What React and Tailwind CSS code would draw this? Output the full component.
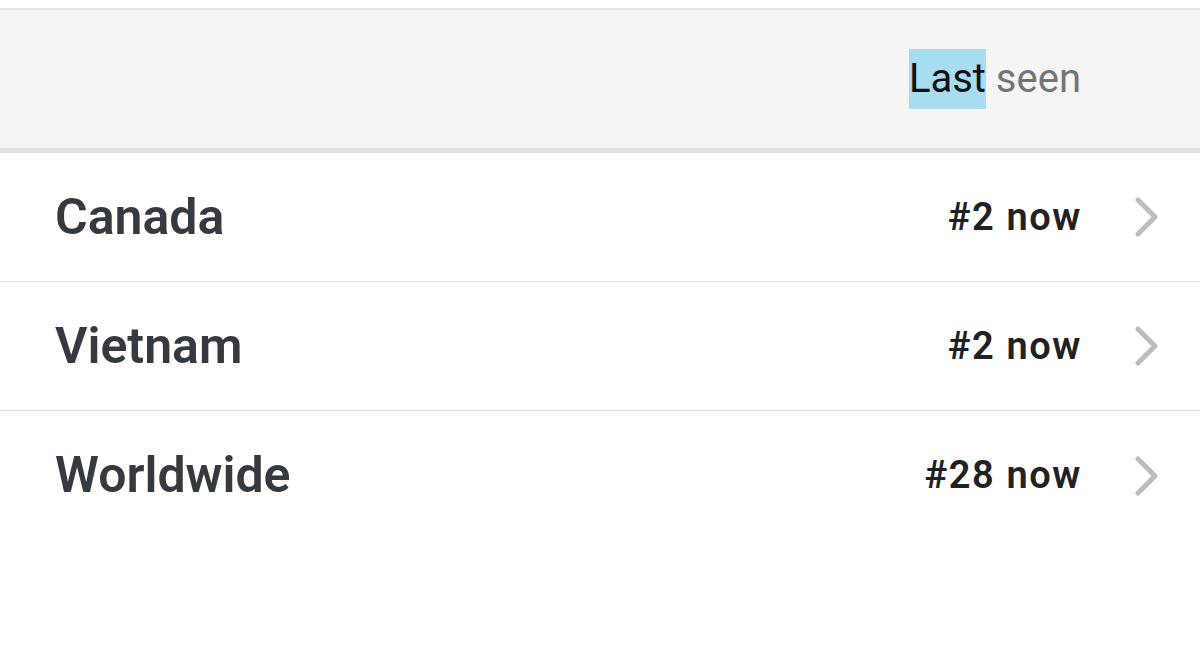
import React from 'react';

const rows = [
    {name: 'Canada', rank: '#2 now'},
    {name: 'Vietnam', rank: '#2 now'},
    {name: 'Worldwide', rank: '#28 now'},
];

const Chevron = () => (
    <svg width="26" height="40" viewBox="0 0 26 40" className="shrink-0">
        <path d="M4 3 L21 20 L4 37" fill="none" stroke="#bdbdbd" strokeWidth="5" strokeLinecap="round"
              strokeLinejoin="round"/>
    </svg>
);

export default function App() {
    return (
        <div className="min-h-screen bg-white pt-[8px]" style={{fontFamily: 'Roboto, "Noto Sans", sans-serif'}}>
            {/* header */}
            <div
                className="flex h-[145px] items-center justify-end border-t-2 border-b-[5px] border-t-[#e6e7e9] border-b-[#dfe2e5] bg-[#f5f5f5] pr-[119px]">
                <div className="text-[40px] leading-none">
                    <span className="inline-block bg-[#a8dcf0] py-[10px] text-[#111]">Last</span>
                    <span className="text-[#70757a]"> seen</span>
                </div>
            </div>

            {rows.map((row, i) => (
                <div key={row.name}
                     className={i < rows.length - 1
                         ? 'flex h-[129px] items-center border-b-[1.5px] border-[#e0e0e0] pl-[55px] pr-[40px]'
                         : 'flex h-[129px] items-center pl-[55px] pr-[40px]'}>
                    <div className="flex-1 text-[50px] font-semibold text-[#353a40]">{row.name}</div>
                    <div className="text-[38px] font-semibold tracking-[1.6px] text-[#202124]">{row.rank}</div>
                    <div className="ml-[52px] flex items-center">
                        <Chevron/>
                    </div>
                </div>
            ))}
        </div>
    );
}
